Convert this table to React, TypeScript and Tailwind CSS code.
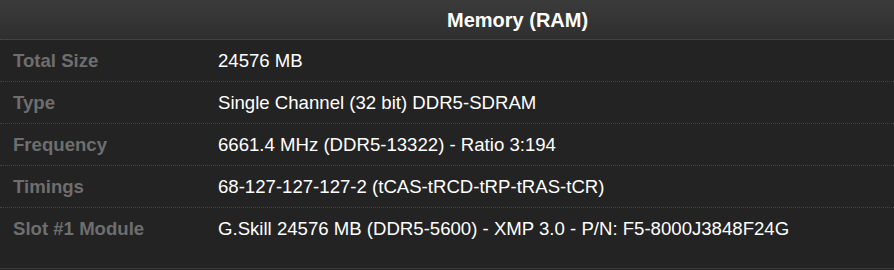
const rows = [
  { label: "Total Size", value: "24576 MB" },
  { label: "Type", value: "Single Channel (32 bit) DDR5-SDRAM" },
  { label: "Frequency", value: "6661.4 MHz (DDR5-13322) - Ratio 3:194" },
  { label: "Timings", value: "68-127-127-127-2 (tCAS-tRCD-tRP-tRAS-tCR)" },
  { label: "Slot #1 Module", value: "G.Skill 24576 MB (DDR5-5600) - XMP 3.0 - P/N: F5-8000J3848F24G" },
];

export default function App() {
  return (
    <div className="h-[270px] w-[894px] bg-[#232323] font-['Liberation_Sans',Arial,sans-serif] text-[18.6px]">
      <div className="flex h-[40px] items-center border-b border-dotted border-[#4a4a4a] bg-gradient-to-b from-[#3b3b3b] to-[#2f2f2f] pl-[447px]">
        <span className="text-[20px] font-bold text-white">Memory (RAM)</span>
      </div>
      <div className="flex flex-col">
        {rows.map((row, i) => (
          <div
            key={row.label}
            className={`flex h-[42px] items-center ${i < rows.length - 1 ? "border-b border-dotted border-[#444444]" : ""}`}
          >
            <div className="w-[218px] pl-[13px] font-bold text-[#6e6e6e]">{row.label}</div>
            <div className="text-white">{row.value}</div>
          </div>
        ))}
      </div>
      <div className="h-[19px] border-b border-[#3a3a3a]" />
    </div>
  );
}
